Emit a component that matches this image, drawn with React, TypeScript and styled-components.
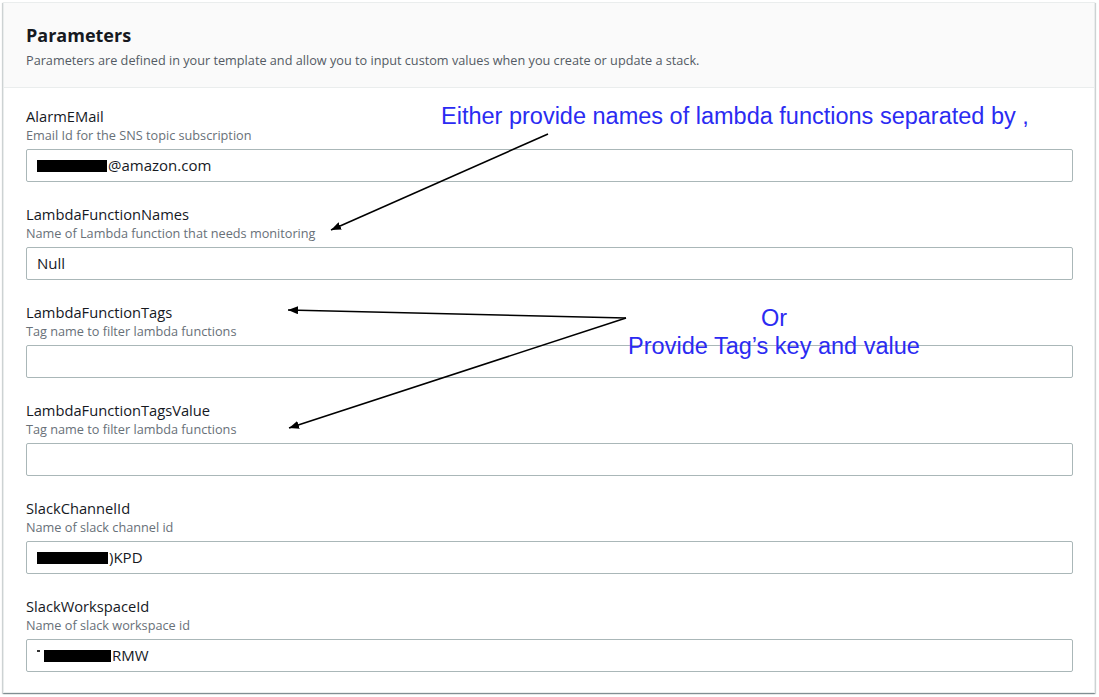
import React from "react";
import styled, { createGlobalStyle } from "styled-components";

const GlobalStyle = createGlobalStyle`
  html, body {
    margin: 0;
    padding: 0;
    background: #ffffff;
  }
  body {
    font-family: "Open Sans", "Noto Sans", Arial, sans-serif;
    color: #16191f;
  }
`;

const Page = styled.div`
  position: relative;
  width: 1099px;
  height: 697px;
  padding: 2px 4px 0 3px;
  box-sizing: border-box;
  overflow: hidden;
`;

const Card = styled.section`
  width: 1092px;
  height: 691px;
  box-sizing: border-box;
  border: 1px solid #eaeded;
  background: #ffffff;
  box-shadow: 0 1px 1px 0 rgba(0, 28, 36, 0.3),
    1px 1px 1px 0 rgba(0, 28, 36, 0.15), -1px 1px 1px 0 rgba(0, 28, 36, 0.15);
`;

const Header = styled.header`
  height: 85px;
  box-sizing: border-box;
  padding: 21px 22px 0;
  background: #fafafa;
  border-bottom: 1px solid #eaeded;
`;

const Title = styled.h2`
  margin: 0;
  font-size: 18px;
  line-height: 22px;
  font-weight: 700;
  color: #16191f;
`;

const Description = styled.p`
  margin: 6px 0 0;
  font-size: 12.7px;
  line-height: 16px;
  color: #545b64;
`;

const Fields = styled.div`
  display: flex;
  flex-direction: column;
  gap: 22px;
  padding: 18px 21px 0 22px;
`;

const Field = styled.div`
  display: flex;
  flex-direction: column;
`;

const Label = styled.label`
  font-size: 14.7px;
  line-height: 20px;
  color: #16191f;
`;

const Hint = styled.span`
  margin-top: 1px;
  font-size: 12.7px;
  line-height: 16px;
  color: #687078;
`;

const InputBox = styled.div`
  margin-top: 6px;
  height: 33px;
  box-sizing: border-box;
  border: 1px solid #aab7b8;
  border-radius: 2px;
  padding: 0 10px;
  display: flex;
  align-items: center;
  font-size: 15px;
  line-height: 31px;
  color: #16191f;
`;

const Redacted = styled.span<{ $w: number }>`
  display: inline-block;
  width: ${(p) => p.$w}px;
  height: 12px;
  background: #000000;
  margin-top: 1px;
  margin-right: 1px;
`;

const Stub = styled.span`
  display: inline-block;
  width: 3px;
  height: 2px;
  background: #333;
  align-self: flex-start;
  margin: 10px 4px 0 0;
`;

const Note = styled.div<{ $x: number; $y: number; $w?: number }>`
  position: absolute;
  left: ${(p) => p.$x}px;
  top: ${(p) => p.$y}px;
  width: ${(p) => (p.$w ? `${p.$w}px` : "auto")};
  font-family: "Liberation Sans", Arial, sans-serif;
  font-size: 23.5px;
  line-height: 28px;
  color: #2b2bf2;
  text-align: center;
  white-space: nowrap;
`;

const Arrows = styled.svg`
  position: absolute;
  left: 0;
  top: 0;
  pointer-events: none;
`;

type Param = {
  name: string;
  hint: string;
  value: React.ReactNode;
};

const params: Param[] = [
  {
    name: "AlarmEMail",
    hint: "Email Id for the SNS topic subscription",
    value: (
      <>
        <Redacted $w={70} />
        <span>@amazon.com</span>
      </>
    ),
  },
  {
    name: "LambdaFunctionNames",
    hint: "Name of Lambda function that needs monitoring",
    value: "Null",
  },
  {
    name: "LambdaFunctionTags",
    hint: "Tag name to filter lambda functions",
    value: null,
  },
  {
    name: "LambdaFunctionTagsValue",
    hint: "Tag name to filter lambda functions",
    value: null,
  },
  {
    name: "SlackChannelId",
    hint: "Name of slack channel id",
    value: (
      <>
        <Redacted $w={71} />
        <span>)KPD</span>
      </>
    ),
  },
  {
    name: "SlackWorkspaceId",
    hint: "Name of slack workspace id",
    value: (
      <>
        <Stub />
        <Redacted $w={67} />
        <span>RMW</span>
      </>
    ),
  },
];

export default function App() {
  return (
    <>
      <GlobalStyle />
      <Page>
        <Card>
          <Header>
            <Title>Parameters</Title>
            <Description>
              Parameters are defined in your template and allow you to input
              custom values when you create or update a stack.
            </Description>
          </Header>
          <Fields>
            {params.map((p) => (
              <Field key={p.name}>
                <Label>{p.name}</Label>
                <Hint>{p.hint}</Hint>
                <InputBox>{p.value}</InputBox>
              </Field>
            ))}
          </Fields>
        </Card>

        <Note $x={441} $y={102}>
          Either provide names of lambda functions separated by ,
        </Note>
        <Note $x={574} $y={304} $w={400}>
          Or
          <br />
          Provide Tag’s key and value
        </Note>

        <Arrows width="1099" height="697" viewBox="0 0 1099 697">
          <defs>
            <marker
              id="head"
              viewBox="0 0 10 8"
              refX="10"
              refY="4"
              markerWidth="10"
              markerHeight="8"
              markerUnits="userSpaceOnUse"
              orient="auto"
            >
              <path d="M0 0 L10 4 L0 8 Z" fill="#000" />
            </marker>
          </defs>
          <g stroke="#000" strokeWidth="1.6" fill="none">
            <line x1="548" y1="134" x2="331" y2="230" markerEnd="url(#head)" />
            <line x1="626" y1="318" x2="288" y2="310" markerEnd="url(#head)" />
            <line x1="626" y1="318" x2="289" y2="428" markerEnd="url(#head)" />
          </g>
        </Arrows>
      </Page>
    </>
  );
}
